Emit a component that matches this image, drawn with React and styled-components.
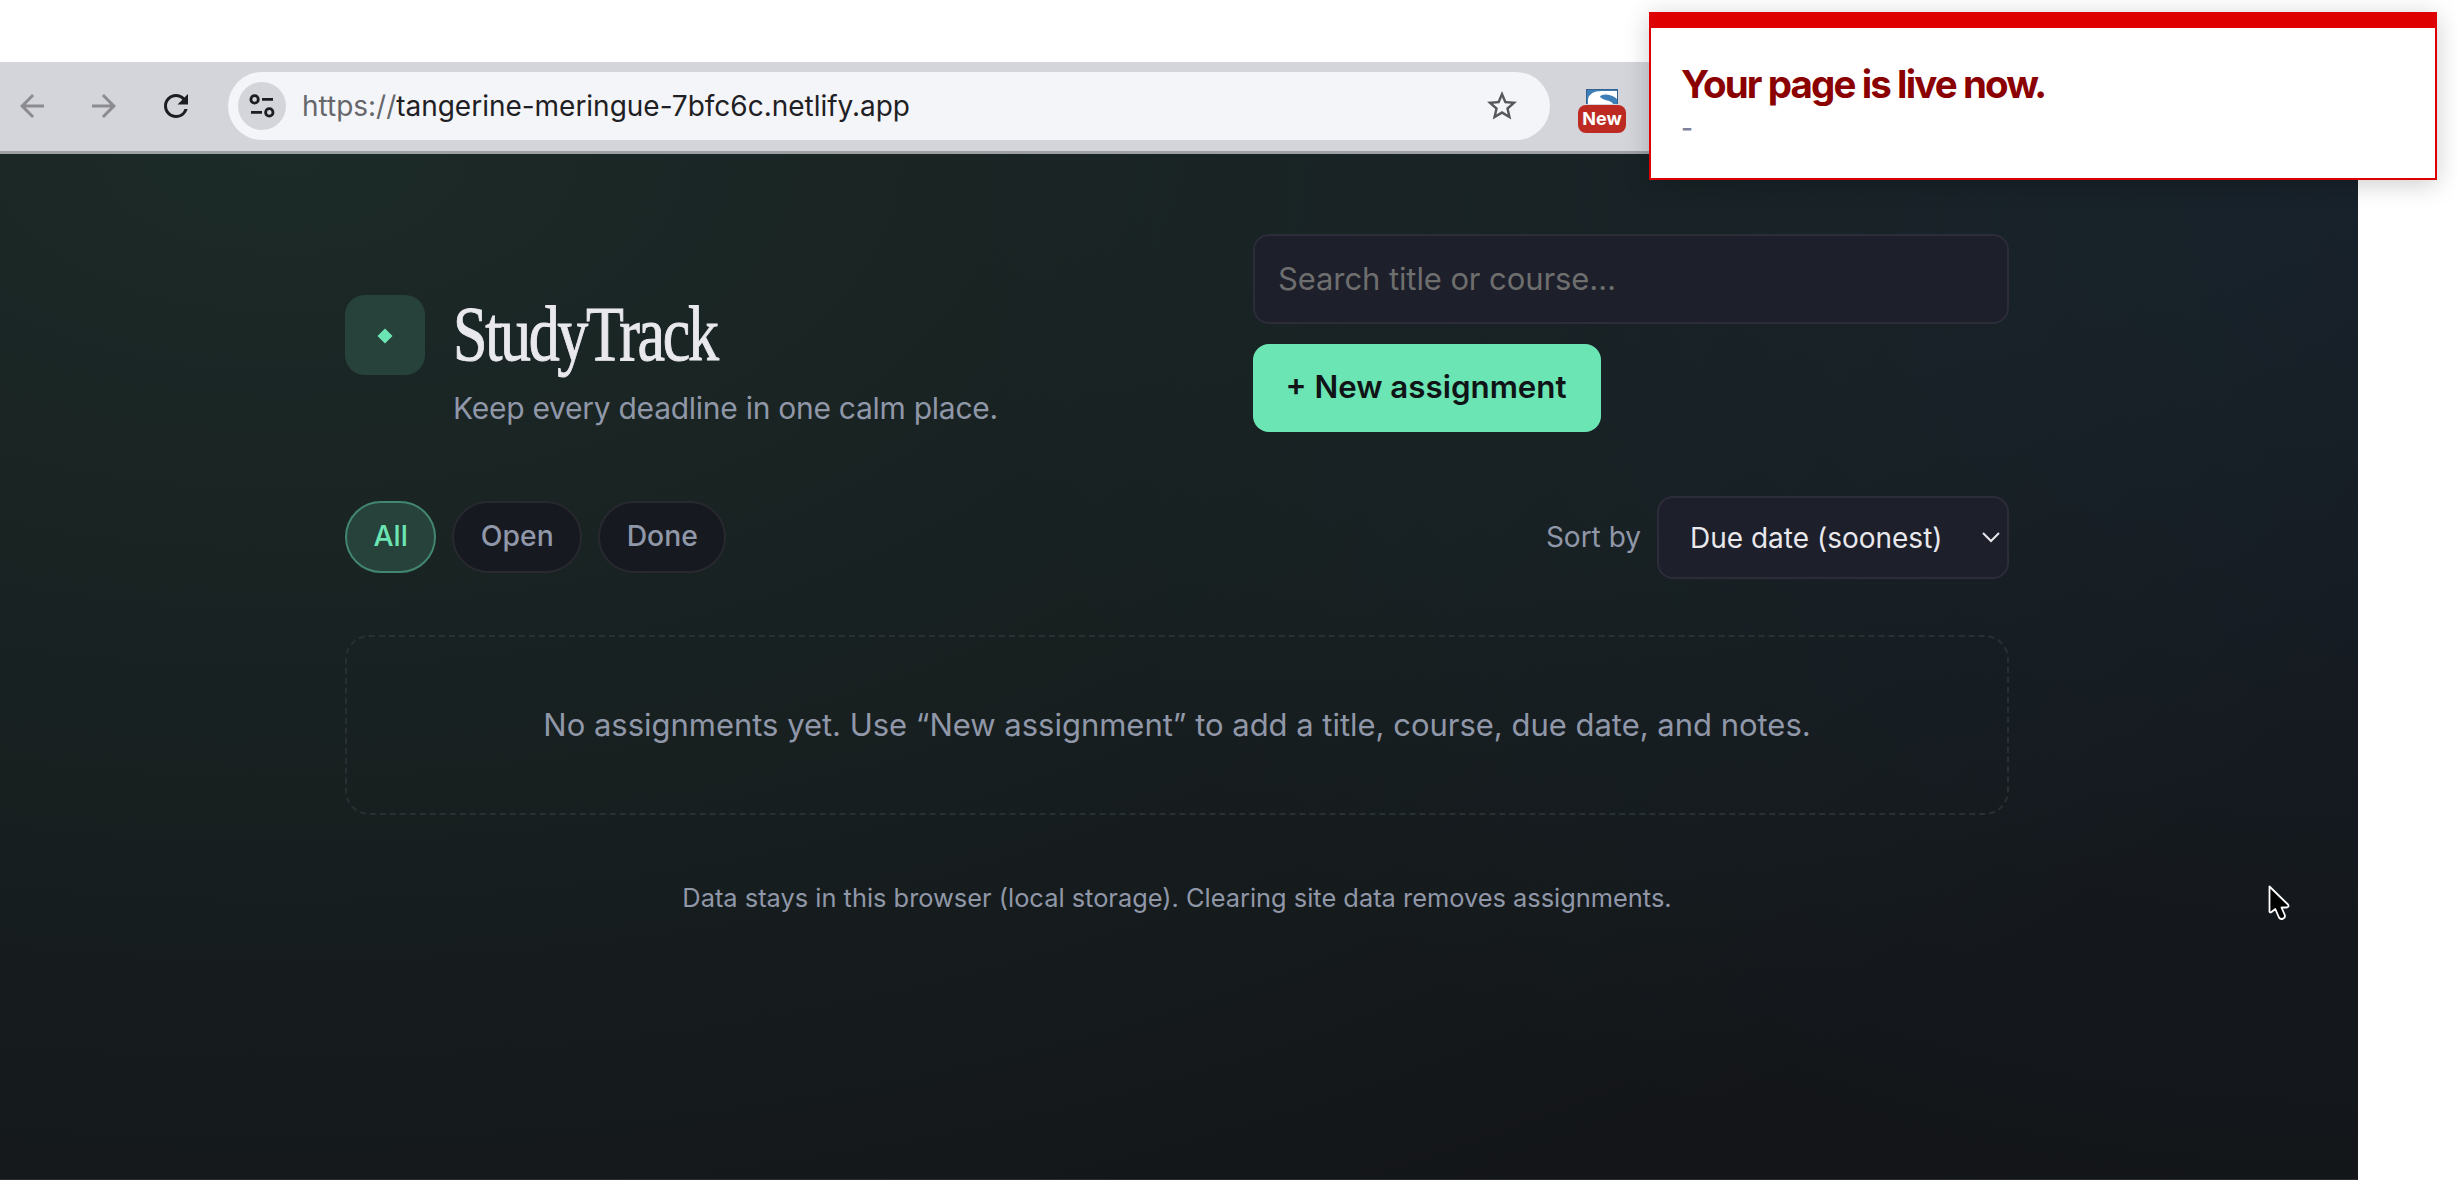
import React from 'react';
import styled, { createGlobalStyle } from 'styled-components';
import { MdArrowBack, MdArrowForward, MdRefresh, MdStarBorder } from 'react-icons/md';

const GlobalStyle = createGlobalStyle`
  * {
    box-sizing: border-box;
  }

  body {
    margin: 0;
    background: #fff;
    font-family: Inter, 'Liberation Sans', sans-serif;
  }
`;

const Screen = styled.div`
  position: relative;
  display: flex;
  flex-direction: column;
  width: 2457px;
  height: 1180px;
  padding-top: 62px;
  overflow: hidden;
`;

/* Browser chrome */

const Toolbar = styled.div`
  display: flex;
  align-items: center;
  width: 2358px;
  height: 92px;
  padding: 0 0 2px 14px;
  background: #d4d5da;
  border-bottom: 3px solid #9da1a4;
`;

const NavButton = styled.span`
  display: flex;
  margin-right: 36px;
  color: ${({ $active }) => ($active ? '#1c1d20' : '#8b8b90')};
`;

const AddressBar = styled.div`
  display: flex;
  align-items: center;
  width: 1322px;
  height: 68px;
  margin-left: -2px;
  padding: 0 30px 0 10px;
  border-radius: 34px;
  background: #f4f5f8;
`;

const SiteInfo = styled.span`
  display: flex;
  align-items: center;
  justify-content: center;
  width: 48px;
  height: 48px;
  margin-right: 16px;
  border-radius: 50%;
  background: #d4d5da;
`;

const Url = styled.span`
  flex: 1;
  font-size: 28px;
  letter-spacing: -0.02px;
  color: #1f2023;
`;

const Scheme = styled.span`
  color: #65676b;
`;

const StarIcon = styled(MdStarBorder)`
  color: #55575a;
`;

const Extension = styled.div`
  display: flex;
  flex-direction: column;
  align-items: center;
  gap: 1px;
  margin: 11px 0 0 28px;
`;

const NewBadge = styled.span`
  width: 48px;
  height: 28px;
  border-radius: 8px;
  background: #bd2a21;
  color: #fff;
  font-size: 18px;
  font-weight: 700;
  line-height: 28px;
  text-align: center;
`;

/* App page */

const Page = styled.main`
  width: 2358px;
  flex: 1;
  padding: 80px 349px 0 345px;
  border-bottom: 1px solid #2c2d31;
  background:
    radial-gradient(ellipse 2300px 1250px at 12% 0%, rgba(107, 229, 179, 0.1), transparent),
    radial-gradient(ellipse 1400px 1050px at 100% 5%, rgba(56, 120, 180, 0.11), transparent),
    #131518;
`;

const Header = styled.header`
  display: flex;
  justify-content: space-between;
  height: 198px;
`;

const Brand = styled.div`
  display: flex;
  gap: 28px;
  padding-top: 61px;
`;

const LogoTile = styled.div`
  display: flex;
  align-items: center;
  justify-content: center;
  width: 80px;
  height: 80px;
  padding-top: 2px;
  border-radius: 20px;
  background: #27423b;
`;

const Title = styled.h1`
  width: 340px;
  margin: -1px 0 0;
  font-family: 'Liberation Serif', serif;
  font-size: 79px;
  font-weight: 400;
  line-height: 80px;
  letter-spacing: -3px;
  color: #e8e8ed;
  -webkit-text-stroke: 1px #e8e8ed;
  transform: scaleX(0.785);
  transform-origin: 0 50%;
`;

const Tagline = styled.p`
  margin: 14px 0 0;
  font-size: 30px;
  line-height: 40px;
  letter-spacing: -0.27px;
  color: #9097a8;
`;

const Actions = styled.div`
  display: flex;
  flex-direction: column;
  align-items: flex-start;
  gap: 20px;
  width: 756px;
`;

const SearchInput = styled.input`
  width: 100%;
  height: 90px;
  padding: 0 23px 2px;
  border: 2px solid #2c2d39;
  border-radius: 16px;
  background: #1d1f2a;
  font-family: inherit;
  font-size: 31px;
  letter-spacing: -0.1px;

  &::placeholder {
    color: #6e6e6e;
  }
`;

const NewButton = styled.button`
  height: 88px;
  width: 348px;
  padding: 0 2px 2px 0;
  border: 0;
  border-radius: 16px;
  background: #6be5b4;
  color: #101416;
  font-family: inherit;
  font-size: 31.3px;
  font-weight: 600;
`;

const Controls = styled.div`
  display: flex;
  align-items: center;
  justify-content: space-between;
  height: 83px;
  margin-top: 64px;
`;

const Filters = styled.div`
  display: flex;
  gap: 16px;
  margin-bottom: 2px;
`;

const FilterPill = styled.button`
  height: 72px;
  padding: 0 26.5px 1px;
  border: 2px solid ${({ $active }) => ($active ? '#42866e' : '#28292f')};
  border-radius: 36px;
  background: ${({ $active }) => ($active ? '#26423a' : '#171920')};
  color: ${({ $active }) => ($active ? '#6be5b4' : '#9097a8')};
  font-family: inherit;
  font-size: 28.3px;
  font-weight: 500;
`;

const Sort = styled.div`
  display: flex;
  align-items: center;
  gap: 16px;
  font-size: 28px;
  color: #9097a8;
`;

const SortLabel = styled.span`
  padding-bottom: 2px;
`;

const SortSelect = styled.div`
  display: flex;
  align-items: center;
  justify-content: space-between;
  width: 352px;
  height: 83px;
  padding: 0 7px 0 31px;
  border: 2px solid #2c2d39;
  border-radius: 16px;
  background: #1d1f2a;
  color: #e8e8ed;
`;

const EmptyState = styled.div`
  display: flex;
  align-items: center;
  justify-content: center;
  height: 180px;
  margin-top: 56px;
  padding-bottom: 1px;
  border: 2px dashed #283031;
  border-radius: 24px;
  font-size: 31px;
  letter-spacing: -0.02px;
  color: #9097a8;
`;

const Footnote = styled.p`
  margin: 67px 0 0;
  font-size: 25.4px;
  line-height: 32px;
  text-align: center;
  color: #9097a8;
`;

/* Overlays */

const Notice = styled.aside`
  position: absolute;
  top: 12px;
  left: 1649px;
  width: 788px;
  height: 168px;
  padding: 33px 30px;
  border: 2px solid #de0000;
  border-top-width: 16px;
  background: #fff;
  box-shadow: 0 4px 24px rgba(0, 0, 0, 0.2);
`;

const NoticeTitle = styled.h2`
  margin: 0;
  font-size: 38.5px;
  font-weight: 700;
  line-height: 46px;
  letter-spacing: -1.9px;
  color: #8b0000;
`;

const NoticeText = styled.p`
  margin: 5px 0 0;
  font-size: 26px;
  font-weight: 500;
  line-height: 32px;
  color: #80809f;
`;

const Pointer = styled.svg`
  position: absolute;
  top: 884px;
  left: 2267px;
`;

const filters = ['All', 'Open', 'Done'];

const TuneIcon = () => (
  <svg width="26" height="24" viewBox="0 0 26 24" fill="none" stroke="#1c1d20" strokeWidth="2.8">
    <circle cx="5.6" cy="5.4" r="3.7" />
    <path d="M13 5.4h11M2 18.4h11" />
    <circle cx="20.3" cy="18.4" r="3.7" />
  </svg>
);

const ExtensionIcon = () => (
  <svg width="32" height="15" viewBox="0 0 32 15">
    <path d="M0 0h32v15H0z" fill="#3f7fb8" />
    <path d="M2 15V10Q4 2 15 2H31V10Q27 6 20 5.5 14 5.5 14 8 16 10 21 11.500 26 12.500 27 15z" fill="#fff" />
    <path d="M.5 15V.5h31V15" fill="none" stroke="#35618e" />
  </svg>
);

const App = () => {
  return (
    <Screen>
      <GlobalStyle />

      <Toolbar>
        <NavButton><MdArrowBack size={36} /></NavButton>
        <NavButton><MdArrowForward size={36} /></NavButton>
        <NavButton $active><MdRefresh size={36} /></NavButton>
        <AddressBar>
          <SiteInfo><TuneIcon /></SiteInfo>
          <Url><Scheme>https://</Scheme>tangerine-meringue-7bfc6c.netlify.app</Url>
          <StarIcon size={36} />
        </AddressBar>
        <Extension>
          <ExtensionIcon />
          <NewBadge>New</NewBadge>
        </Extension>
      </Toolbar>

      <Page>
        <Header>
          <Brand>
            <LogoTile>
              <svg width="16" height="16" viewBox="0 0 16 16">
                <path d="M8 .5 15.5 8 8 15.5.5 8z" fill="#6be5b4" />
              </svg>
            </LogoTile>
            <div>
              <Title>StudyTrack</Title>
              <Tagline>Keep every deadline in one calm place.</Tagline>
            </div>
          </Brand>
          <Actions>
            <SearchInput placeholder="Search title or course…" />
            <NewButton>+ New assignment</NewButton>
          </Actions>
        </Header>

        <Controls>
          <Filters>
            {filters.map((name) => (
              <FilterPill key={name} $active={name === 'All'}>{name}</FilterPill>
            ))}
          </Filters>
          <Sort>
            <SortLabel>Sort by</SortLabel>
            <SortSelect>
              Due date (soonest)
              <svg width="18" height="11" viewBox="0 0 18 11" fill="none" stroke="#e8e8ed" strokeWidth="2">
                <path d="M1 1l8 8 8-8" />
              </svg>
            </SortSelect>
          </Sort>
        </Controls>

        <EmptyState>
          No assignments yet. Use “New assignment” to add a title, course, due date, and notes.
        </EmptyState>
        <Footnote>
          Data stays in this browser (local storage). Clearing site data removes assignments.
        </Footnote>
      </Page>

      <Notice>
        <NoticeTitle>Your page is live now.</NoticeTitle>
        <NoticeText>-</NoticeText>
      </Notice>

      <Pointer width="24" height="38" viewBox="0 0 24 38">
        <path
          d="M2.5 2.5V27.6Q3 29 4.5 28L8.3 25 12 33.5Q13.5 35.8 16 34.6 18.6 33.5 17.8 31L14.5 23.5H20Q22.5 22.6 21 20.5z"
          fill="#000"
          stroke="#fff"
          strokeWidth="1.8"
          strokeLinejoin="round"
        />
      </Pointer>
    </Screen>
  );
};

export default App;
